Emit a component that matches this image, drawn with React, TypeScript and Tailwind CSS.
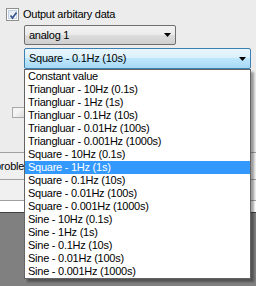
import React from 'react';

const options = [
  'Constant value',
  'Triangluar - 10Hz (0.1s)',
  'Triangluar - 1Hz (1s)',
  'Triangluar - 0.1Hz (10s)',
  'Triangluar - 0.01Hz (100s)',
  'Triangluar - 0.001Hz (1000s)',
  'Square - 10Hz (0.1s)',
  'Square - 1Hz (1s)',
  'Square - 0.1Hz (10s)',
  'Square - 0.01Hz (100s)',
  'Square - 0.001Hz (1000s)',
  'Sine - 10Hz (0.1s)',
  'Sine - 1Hz (1s)',
  'Sine - 0.1Hz (10s)',
  'Sine - 0.01Hz (100s)',
  'Sine - 0.001Hz (1000s)',
];

const selected = 'Square - 1Hz (1s)';

function Arrow() {
  return (
    <svg width="7" height="4" viewBox="0 0 7 4" className="shrink-0">
      <path d="M0 0h7L3.5 4z" fill="#000" />
    </svg>
  );
}

function CheckBox() {
  return (
    <div className="w-[13px] h-[13px] border border-[#8e8f8f] bg-white p-px shrink-0">
      <div className="w-full h-full border border-[#c4d4e6] bg-gradient-to-br from-[#dfe6ee] to-[#ffffff] relative">
        <svg width="11" height="11" viewBox="0 0 11 11" className="absolute -left-px -top-px">
          <path d="M2.5 5.5 L4.5 8 L8.5 2.5" stroke="#3d5a8f" strokeWidth="1.8" fill="none" />
        </svg>
      </div>
    </div>
  );
}

export default function App() {
  return (
    <div className="relative w-[256px] h-[286px] overflow-hidden bg-[#ececec] font-['Liberation_Sans',Arial,sans-serif] text-[11px] tracking-[-0.25px] text-black">
      <div className="flex flex-col">
        {/* options panel */}
        <div className="h-[152px] pt-[8px] pl-[6px] flex flex-col">
          <div className="flex items-center gap-[4px] h-[13px]">
            <CheckBox />
            <span className="leading-[13px]">Output arbitary data</span>
          </div>

          <div className="ml-[18px] mt-[4px] w-[152px] h-[20px] rounded-[2px] border border-[#707070] bg-[linear-gradient(#f2f2f2_0%,#ebebeb_50%,#dddddd_50%,#cfcfcf_100%)] flex items-center justify-between pl-[4px] pr-[4px]">
            <span>analog 1</span>
            <Arrow />
          </div>

          <div className="ml-[18px] mt-[3px] w-[227px] h-[21px] rounded-[2px] border border-[#3c7fb1] bg-[linear-gradient(#eaf6fd_0%,#d9f0fc_50%,#bee6fd_50%,#a7d9f5_100%)] flex items-center justify-between pl-[4px] pr-[4px]">
            <span>Square - 0.1Hz (10s)</span>
            <Arrow />
          </div>

          <div className="ml-[6px] mt-[38px] w-[13px] h-[11px] border border-[#a9a9a9] bg-[linear-gradient(135deg,#f4f4f4_40%,#dcdcdc_100%)]" />
        </div>

        <div className="h-px bg-[#a0a0a0]" />
        <div className="h-[26px] bg-[#f0f0f0] flex items-center">
          <div className="w-[24px] overflow-hidden">
            <span className="block -ml-[5px] mt-[1px] whitespace-nowrap leading-[13px]">problem</span>
          </div>
        </div>
        <div className="h-px bg-[#a0a0a0]" />
        <div className="h-[20px] bg-[#f0f0f0]" />
        <div className="h-px bg-[#a0a0a0]" />
        <div className="h-[11px] bg-white" />
        <div className="h-px bg-[#404040]" />
        <div className="h-[73px] bg-[#808080]" />
      </div>

      {/* dropped-down list */}
      <ul className="absolute left-[24px] top-[69px] w-[227px] border border-[#646464] bg-white shadow-[3px_3px_2px_rgba(0,0,0,0.35)]">
        {options.map((opt) => (
          <li
            key={opt}
            className={`h-[13px] leading-[13px] pl-[3px] whitespace-nowrap ${
              opt === selected ? 'bg-[#3399ff] text-white' : ''
            }`}
          >
            {opt}
          </li>
        ))}
      </ul>
    </div>
  );
}
